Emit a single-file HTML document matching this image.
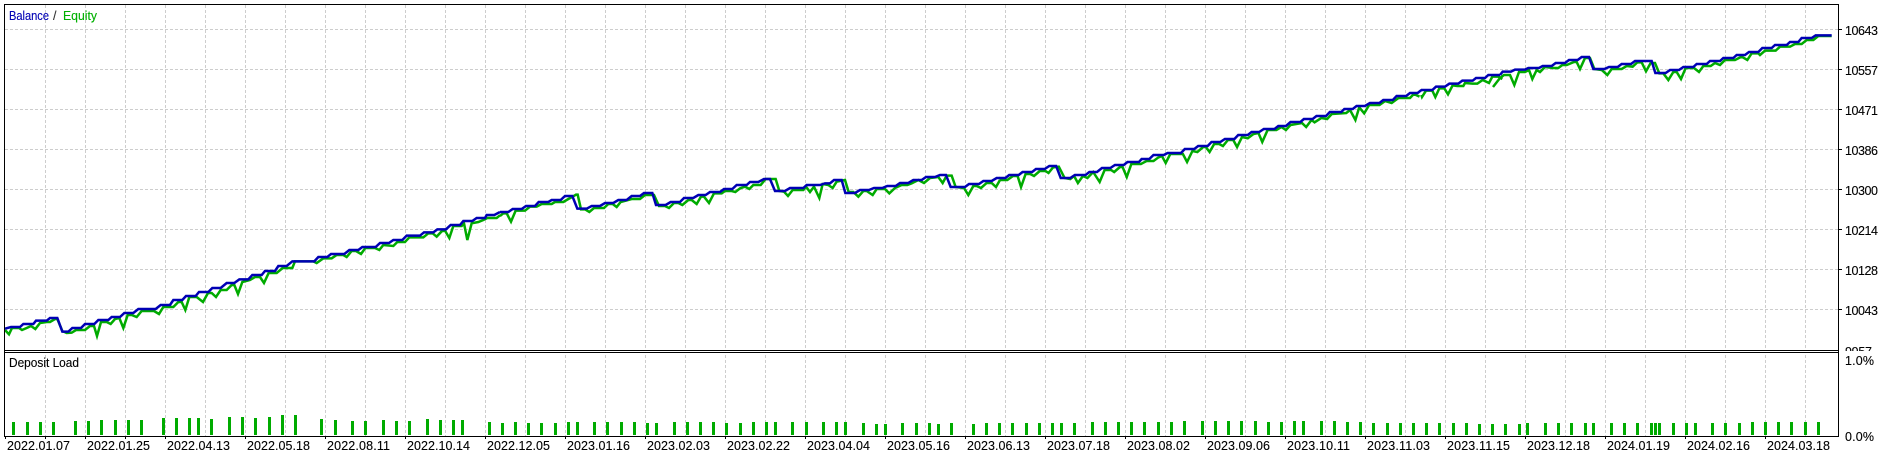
<!DOCTYPE html>
<html>
<head>
<meta charset="utf-8">
<title>Balance / Equity</title>
<style>
html,body{margin:0;padding:0;background:#fff;width:1893px;height:456px;overflow:hidden}
svg{display:block}
text{font-family:"Liberation Sans",sans-serif;font-size:12.5px;fill:#000;stroke:#000;stroke-width:.12px}
.c polyline{fill:none;stroke-width:2.5;vector-effect:non-scaling-stroke;stroke-linejoin:miter}
.g polyline{stroke:#00ab00}
.b polyline{stroke:#0000b4}
</style>
</head>
<body>
<svg width="1893" height="456" viewBox="0 0 1893 456" xmlns="http://www.w3.org/2000/svg">
<defs><clipPath id="cl"><rect x="1840" y="340" width="50" height="11"/></clipPath></defs>
<rect width="1893" height="456" fill="#fff"/>

<!-- grid -->
<path fill="none" stroke="#cdcdcd" stroke-width="1" stroke-dasharray="3 2" d="M5 29.5H1838M5 69.5H1838M5 109.5H1838M5 149.5H1838M5 189.5H1838M5 229.5H1838M5 269.5H1838M5 309.5H1838"/>
<path fill="none" stroke="#cdcdcd" stroke-width="1" stroke-dasharray="3 2" d="M45.5 5V436M85.5 5V436M125.5 5V436M165.5 5V436M205.5 5V436M245.5 5V436M285.5 5V436M325.5 5V436M365.5 5V436M405.5 5V436M445.5 5V436M485.5 5V436M525.5 5V436M565.5 5V436M605.5 5V436M645.5 5V436M685.5 5V436M725.5 5V436M765.5 5V436M805.5 5V436M845.5 5V436M885.5 5V436M925.5 5V436M965.5 5V436M1005.5 5V436M1045.5 5V436M1085.5 5V436M1125.5 5V436M1165.5 5V436M1205.5 5V436M1245.5 5V436M1285.5 5V436M1325.5 5V436M1365.5 5V436M1405.5 5V436M1445.5 5V436M1485.5 5V436M1525.5 5V436M1565.5 5V436M1605.5 5V436M1645.5 5V436M1685.5 5V436M1725.5 5V436M1765.5 5V436M1805.5 5V436"/>

<!-- equity (green) -->
<g class="c g">
<polyline transform="translate(0 200) scale(.33333)" points="15,390 27,403 36,384 57,384 66,390 80,384 93,378 106,387 120,369 140,366 150,366 165,357 172,357 187,393 200,399 215,398 228,390 255,390 270,378 282,378 291,408 303,366 320,366 332,372 345,357 358,354 370,384 383,345 395,345 410,351 425,333 462,333 477,342 490,321 520,321 535,306 545,306 556,330 568,291 590,291 609,306 624,279 635,279 648,291 662,270 680,270 695,255 703,255 714,282 727,246 750,240 765,231 780,231 792,249 806,219 830,219 848,204 877,204 885,184 940,184 950,189 970,175 995,175 1010,165 1030,165 1040,171 1055,153 1068,153 1083,162 1096,144 1125,144 1138,150 1150,135 1180,138 1192,126 1215,126 1228,112 1270,112 1285,100 1298,100 1310,110 1325,94 1335,92 1348,114 1360,78 1385,78 1392,70 1402,120 1415,70 1435,66 1450,60 1462,54 1490,54 1500,46"/>
<polyline transform="translate(500 140) scale(.33333)" points="0,228 10,220 20,220 33,245 47,212 75,212 90,200 110,200 125,192 155,192 165,186 190,186 205,177 215,172 228,164 233,164 243,208 255,208 268,216 282,204 312,204 325,192 338,192 350,201 362,186 395,177 420,177 435,165 462,165 477,198 495,198 507,204 522,189 535,189 547,195 565,180 575,180 590,192 603,170 612,170 627,189 642,160 665,160 675,153 695,153 706,156 720,145 735,140 748,147 760,135 782,135 797,117 827,117 838,153 852,155 864,168 878,150 910,150 918,140 930,156 942,140 958,174 968,132 985,135 998,144 1010,125 1035,120 1046,156 1060,156 1075,170 1090,153 1100,153 1118,165 1130,147 1155,147 1168,160 1185,144 1205,135 1222,135 1235,130 1255,120 1272,129 1290,114 1315,111 1328,129 1340,107 1355,107 1367,141 1392,144 1405,165 1420,138 1430,138 1443,144 1460,129 1475,129 1488,141 1500,120"/>
<polyline transform="translate(999.66 90) scale(.3817 .33333)" points="0,270 20,270 35,258 47,258 56,291 68,252 80,252 90,258 105,243 120,243 128,249 140,232 155,230 170,264 185,267 195,258 205,279 218,258 230,264 245,246 262,276 275,240 292,240 300,246 315,231 322,231 333,261 345,222 370,222 385,213 403,213 415,203 425,198 435,219 447,192 480,192 491,216 505,183 518,186 533,171 540,171 550,186 562,162 575,162 585,168 598,150 612,150 622,171 635,141 650,145 665,132 678,129 688,156 702,120 725,120 738,111 750,120 762,105 792,99 803,111 817,90 825,97 843,84 858,87 870,72 908,69 918,60 932,90 942,52 955,70 968,45 995,45 1010,33 1027,39 1045,24 1075,24 1085,12 1100,20"/>
<polyline transform="translate(1400 50) scale(.33333)" points="64,135 66,141 78,122 97,122 106,141 118,115 133,115 144,133 158,106 172,108 190,108 195,99 218,101 232,101 248,90 267,99 277,80 295,80 307,87"/>
<polyline transform="translate(1500 20) scale(.33333)" points="-21,201 0,174 12,165 30,165 43,195 57,156 75,156 87,150 97,177 110,150 120,156 135,141 160,144 175,144 187,135 200,135 222,126 230,126 240,147 255,114 270,114 283,147 305,150 322,165 335,147 365,147 380,138 398,140 412,127 425,127 438,154 452,129 465,129 478,160 490,160 505,180 520,156 530,156 543,177 557,144 582,144 597,156 610,138 632,138 645,129 660,135 675,120 705,120 725,110 742,120 755,100 775,100 780,105 795,92 827,92 840,80 870,80 885,72 905,72 920,60 940,60 955,48 995,48"/>
</g>

<!-- balance (blue) -->
<g class="c b">
<polyline transform="translate(0 200) scale(.33333)" points="15,386 33,381 60,381 70,372 100,372 108,362 140,362 150,354 172,354 187,395 205,395 217,384 243,384 255,372 283,372 295,360 325,360 335,351 360,351 373,339 400,339 415,327 467,327 482,315 510,315 520,300 547,300 558,288 587,288 597,276 625,276 637,264 662,264 680,249 703,249 718,238 745,238 757,225 785,225 795,213 825,213 835,198 860,198 877,184 943,184 955,171 982,171 993,162 1033,162 1048,150 1075,150 1087,141 1127,141 1140,129 1167,129 1180,120 1207,120 1220,107 1260,107 1272,97 1300,97 1312,88 1338,88 1352,75 1380,75 1390,63 1417,63 1430,54 1455,54 1460,45 1483,45 1500,36"/>
<polyline transform="translate(500 140) scale(.33333)" points="0,216 25,216 38,207 65,207 78,198 105,198 116,186 145,186 155,180 182,180 195,168 217,168 232,206 260,206 275,198 300,198 315,189 340,189 355,180 380,180 395,168 420,168 432,159 457,159 468,195 497,195 512,186 540,186 552,174 580,174 595,165 617,165 630,156 660,156 672,147 697,147 710,135 740,135 750,126 775,126 792,117 810,117 825,153 855,153 870,144 910,144 920,135 960,135 975,130 990,130 1002,120 1025,120 1036,159 1065,159 1080,150 1107,150 1122,144 1147,144 1162,138 1187,138 1200,129 1225,129 1240,120 1265,120 1278,111 1305,111 1320,105 1338,105 1352,141 1395,141 1407,132 1437,132 1450,123 1475,123 1490,114 1500,114"/>
<polyline transform="translate(999.66 90) scale(.3817 .33333)" points="0,264 15,264 25,255 50,255 60,246 85,246 95,237 118,237 130,228 148,228 160,264 185,264 197,255 225,255 235,246 255,246 268,234 290,234 302,225 325,225 335,216 365,216 372,207 392,207 403,195 430,195 440,189 475,189 485,177 510,177 520,168 545,168 555,156 578,156 590,147 615,147 625,135 650,135 660,126 680,126 692,117 720,117 730,108 750,108 762,96 788,96 797,87 820,87 830,78 855,78 865,66 895,66 903,57 925,57 935,48 957,48 970,39 995,39 1005,30 1030,30 1040,18 1065,18 1075,9 1095,9 1105,0"/>
<polyline transform="translate(1400 50) scale(.33333)" points="63,120 97,120 108,110 135,110 148,101 175,101 187,92 218,92 228,84 255,84 265,75 297,75 300,75"/>
<polyline transform="translate(1500 20) scale(.33333)" points="0,165 8,155 33,155 45,149 75,149 85,144 117,144 128,138 155,138 167,129 195,129 207,120 233,120 245,111 267,111 280,147 313,147 327,141 353,141 365,132 393,132 405,123 455,123 466,159 497,159 510,150 537,150 550,141 580,141 590,132 620,132 630,123 660,123 670,114 700,114 710,105 735,105 747,96 775,96 787,84 815,84 825,75 860,75 870,66 895,66 905,54 935,54 947,46 995,46"/>
</g>

<!-- deposit load bars -->
<path fill="none" stroke="#00ab00" stroke-width="3" d="M13.5 422V435M27.5 422V435M40.5 422V435M53.5 422V435M75.5 421V435M88.5 421V435M101.5 420V435M115.5 420V435M128.5 420V435M141.5 420V435M163.5 418V435M176.5 418V435M189.5 418V435M198.5 418V435M211.5 419V435M229.5 417V435M242.5 417V435M255.5 418V435M269.5 417V435M282.5 415V435M295.5 415V435M321.5 419V435M335.5 420V435M352.5 421V435M365.5 421V435M383.5 420V435M396.5 421V435M409.5 421V435M427.5 419V435M440.5 420V435M453.5 420V435M462.5 420V435M489.5 422V435M502.5 423V435M515.5 422V435M528.5 423V435M541.5 423V435M555.5 423V435M568.5 422V435M577.5 422V435M594.5 422V435M607.5 422V435M621.5 422V435M634.5 422V435M647.5 423V435M656.5 423V435M674.5 422V435M687.5 422V435M700.5 422V435M713.5 422V435M726.5 423V435M740.5 423V435M753.5 422V435M766.5 422V435M775.5 422V435M792.5 422V435M806.5 422V435M823.5 422V435M836.5 422V435M845.5 422V435M863.5 423V435M876.5 424V435M885.5 424V435M902.5 423V435M916.5 423V435M929.5 423V435M938.5 424V435M951.5 423V435M973.5 424V435M986.5 423V435M999.5 423V435M1012.5 423V435M1026.5 423V435M1039.5 423V435M1052.5 423V435M1061.5 423V435M1074.5 423V435M1092.5 422V435M1105.5 422V435M1118.5 422V435M1131.5 422V435M1144.5 422V435M1158.5 422V435M1171.5 422V435M1184.5 421V435M1202.5 421V435M1215.5 421V435M1228.5 421V435M1241.5 421V435M1255.5 421V435M1268.5 422V435M1281.5 422V435M1294.5 421V435M1303.5 421V435M1321.5 421V435M1334.5 421V435M1347.5 422V435M1360.5 422V435M1373.5 423V435M1387.5 423V435M1400.5 423V435M1413.5 423V435M1426.5 423V435M1439.5 423V435M1453.5 423V435M1466.5 423V435M1479.5 424V435M1492.5 424V435M1505.5 424V435M1519.5 424V435M1527.5 423V435M1545.5 423V435M1558.5 423V435M1571.5 423V435M1585.5 423V435M1593.5 423V435M1611.5 423V435M1624.5 423V435M1637.5 423V435M1651.5 423V435M1655.5 423V435M1659.5 423V435M1673.5 423V435M1686.5 423V435M1695.5 423V435M1712.5 423V435M1725.5 423V435M1739.5 423V435M1752.5 422V435M1765.5 422V435M1778.5 422V435M1791.5 422V435M1805.5 422V435M1818.5 422V435"/>

<!-- frames -->
<rect x="0" y="351" width="1839" height="1" fill="#fff"/>
<path fill="none" stroke="#000" stroke-width="1" d="M4.5 4.5H1838.5V436.5H4.5ZM4.5 350.5H1838.5M4.5 352.5H1838.5"/>
<!-- ticks -->
<path fill="none" stroke="#000" stroke-width="1" d="M1839 29.5h3M1839 69.5h3M1839 109.5h3M1839 149.5h3M1839 189.5h3M1839 229.5h3M1839 269.5h3M1839 309.5h3M5.5 437v2M45.5 437v2M85.5 437v2M125.5 437v2M165.5 437v2M245.5 437v2M325.5 437v2M405.5 437v2M485.5 437v2M565.5 437v2M645.5 437v2M725.5 437v2M805.5 437v2M885.5 437v2M965.5 437v2M1045.5 437v2M1125.5 437v2M1205.5 437v2M1285.5 437v2M1365.5 437v2M1445.5 437v2M1525.5 437v2M1605.5 437v2M1685.5 437v2M1765.5 437v2"/>

<!-- titles -->
<text x="9" y="20" style="fill:#0000b4;stroke:#0000b4" textLength="40" lengthAdjust="spacingAndGlyphs">Balance</text>
<text x="53" y="20" style="fill:#333;stroke:#333">/</text>
<text x="63" y="20" style="fill:#00b000;stroke:#00b000" textLength="34" lengthAdjust="spacingAndGlyphs">Equity</text>
<text x="9" y="367" textLength="70" lengthAdjust="spacingAndGlyphs">Deposit Load</text>

<!-- right axis -->
<text x="1845" y="35" textLength="33">10643</text>
<text x="1845" y="75" textLength="33">10557</text>
<text x="1845" y="115" textLength="33">10471</text>
<text x="1845" y="155" textLength="33">10386</text>
<text x="1845" y="195" textLength="33">10300</text>
<text x="1845" y="235" textLength="33">10214</text>
<text x="1845" y="275" textLength="33">10128</text>
<text x="1845" y="315" textLength="33">10043</text>
<text x="1845" y="356" clip-path="url(#cl)" textLength="27">9957</text>
<text x="1845" y="365" textLength="29">1.0%</text>
<text x="1845" y="441" textLength="29">0.0%</text>

<!-- bottom axis -->
<g>
<text x="7" y="450" textLength="63">2022.01.07</text>
<text x="87" y="450" textLength="63">2022.01.25</text>
<text x="167" y="450" textLength="63">2022.04.13</text>
<text x="247" y="450" textLength="63">2022.05.18</text>
<text x="327" y="450" textLength="63">2022.08.11</text>
<text x="407" y="450" textLength="63">2022.10.14</text>
<text x="487" y="450" textLength="63">2022.12.05</text>
<text x="567" y="450" textLength="63">2023.01.16</text>
<text x="647" y="450" textLength="63">2023.02.03</text>
<text x="727" y="450" textLength="63">2023.02.22</text>
<text x="807" y="450" textLength="63">2023.04.04</text>
<text x="887" y="450" textLength="63">2023.05.16</text>
<text x="967" y="450" textLength="63">2023.06.13</text>
<text x="1047" y="450" textLength="63">2023.07.18</text>
<text x="1127" y="450" textLength="63">2023.08.02</text>
<text x="1207" y="450" textLength="63">2023.09.06</text>
<text x="1287" y="450" textLength="63">2023.10.11</text>
<text x="1367" y="450" textLength="63">2023.11.03</text>
<text x="1447" y="450" textLength="63">2023.11.15</text>
<text x="1527" y="450" textLength="63">2023.12.18</text>
<text x="1607" y="450" textLength="63">2024.01.19</text>
<text x="1687" y="450" textLength="63">2024.02.16</text>
<text x="1767" y="450" textLength="63">2024.03.18</text>
</g>
</svg>
</body>
</html>
